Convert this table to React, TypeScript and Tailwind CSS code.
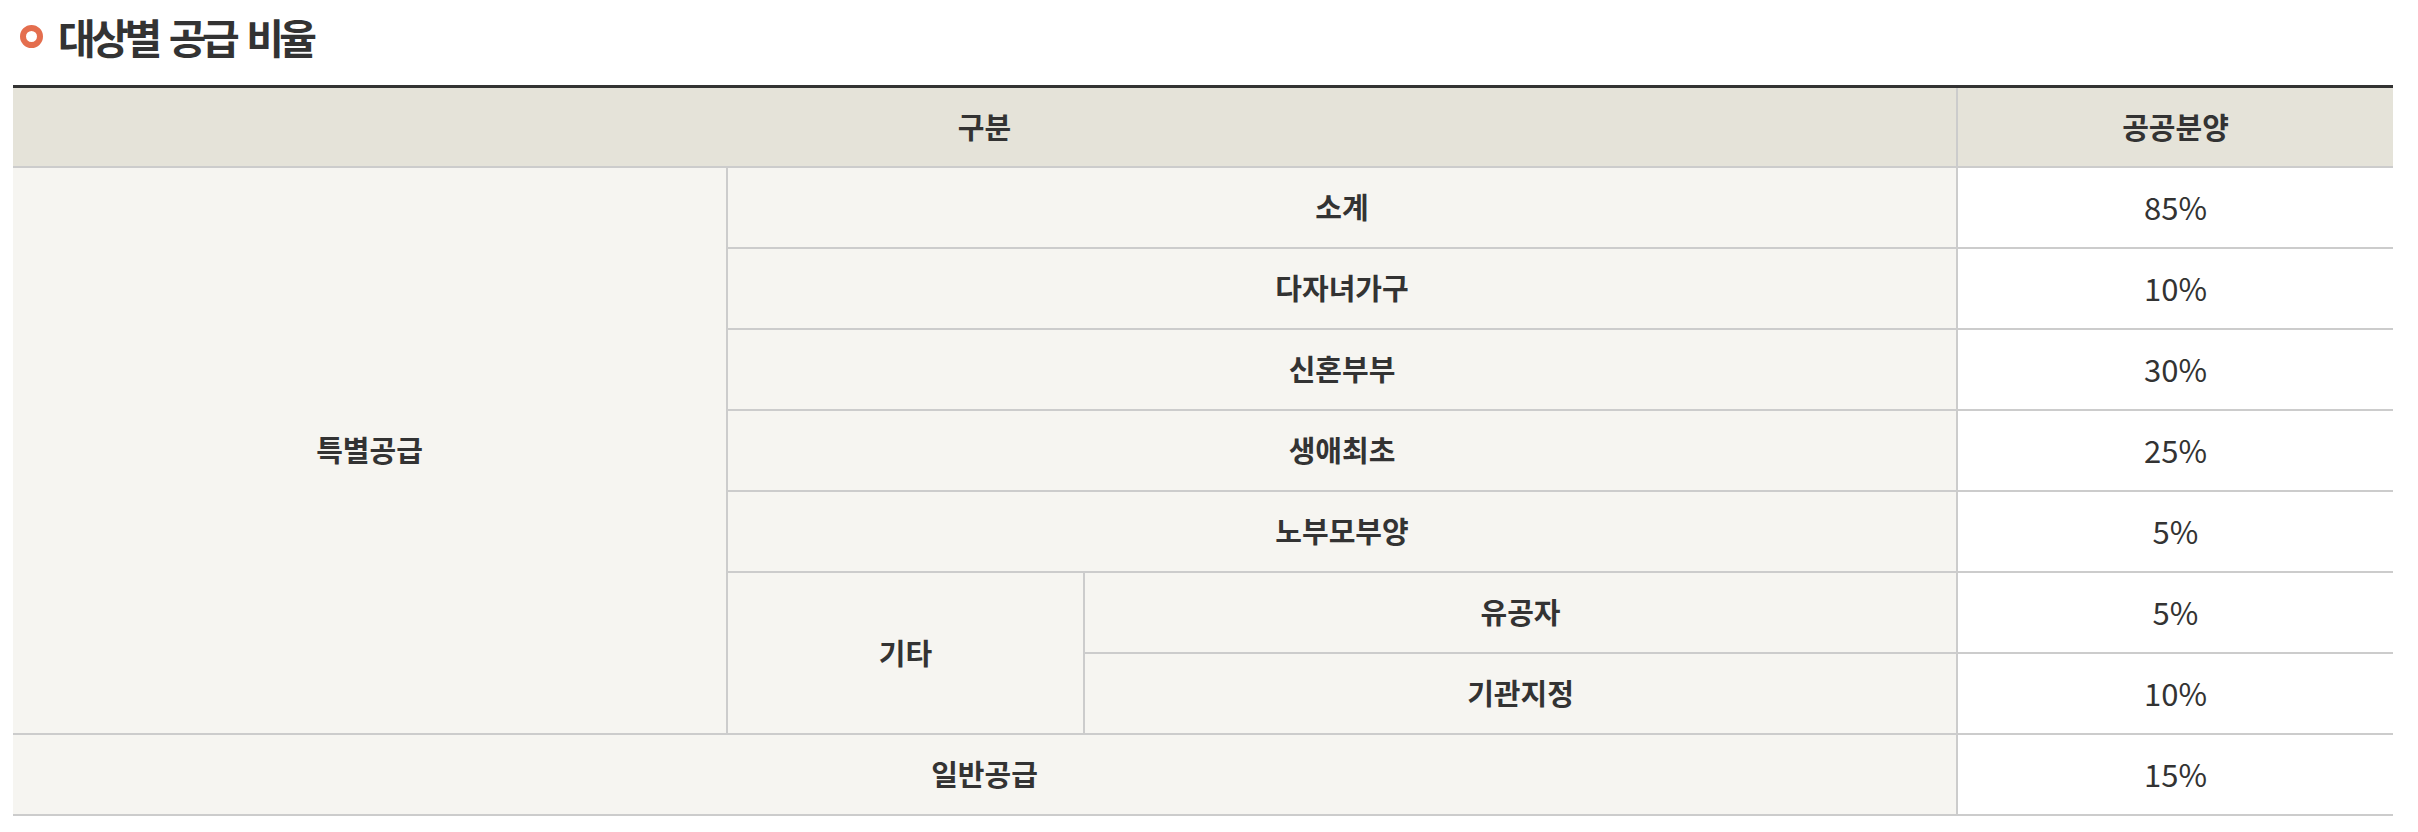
import React from 'react';

type Row = { label: string; value: string };

const specials: Row[] = [
  { label: '다자녀가구', value: '10%' },
  { label: '신혼부부', value: '30%' },
  { label: '생애최초', value: '25%' },
  { label: '노부모부양', value: '5%' },
];

const cell = 'border-b-2 border-[#cccccc] text-center align-middle';
const label = `${cell} bg-[#f6f5f1] font-bold text-[29px]`;
const value = `${cell} border-l-2 bg-white text-[31px] font-normal`;

const App: React.FC = () => {
  return (
    <div
      className="min-h-screen bg-white text-[#333333]"
      style={{ fontFamily: '"Noto Sans CJK KR", "Noto Sans", sans-serif' }}
    >
      {/* Section title */}
      <div className="flex items-center h-[72px] pl-[20px] gap-[15px] mb-[13px]">
        <span className="w-[23px] h-[23px] rounded-full border-[6px] border-[#e46e4e]" />
        <h2 className="flex gap-[11px] text-[41px] font-bold tracking-[-4.5px] leading-none">
          <span>대상별</span>
          <span>공급</span>
          <span>비율</span>
        </h2>
      </div>

      {/* Supply ratio table */}
      <div className="pl-[13px]">
        <table className="w-[2380px] table-fixed border-collapse border-t-[3px] border-[#333333]">
          <colgroup>
            <col className="w-[714px]" />
            <col className="w-[357px]" />
            <col className="w-[873px]" />
            <col className="w-[436px]" />
          </colgroup>
          <thead>
            <tr className="h-[80px]">
              <th colSpan={3} className={`${cell} bg-[#e5e3d9] font-bold text-[29px]`}>구분</th>
              <th className={`${cell} border-l-2 bg-[#e5e3d9] font-bold text-[29px]`}>공공분양</th>
            </tr>
          </thead>
          <tbody>
            <tr className="h-[81px]">
              <td rowSpan={7} className={label}>특별공급</td>
              <td colSpan={2} className={`${label} border-l-2`}>소계</td>
              <td className={value}>85%</td>
            </tr>
            {specials.map((r) => (
              <tr key={r.label} className="h-[81px]">
                <td colSpan={2} className={`${label} border-l-2`}>{r.label}</td>
                <td className={value}>{r.value}</td>
              </tr>
            ))}
            <tr className="h-[81px]">
              <td rowSpan={2} className={`${label} border-l-2`}>기타</td>
              <td className={`${label} border-l-2`}>유공자</td>
              <td className={value}>5%</td>
            </tr>
            <tr className="h-[81px]">
              <td className={`${label} border-l-2`}>기관지정</td>
              <td className={value}>10%</td>
            </tr>
            <tr className="h-[81px]">
              <td colSpan={3} className={label}>일반공급</td>
              <td className={value}>15%</td>
            </tr>
          </tbody>
        </table>
      </div>
    </div>
  );
};

export default App;
